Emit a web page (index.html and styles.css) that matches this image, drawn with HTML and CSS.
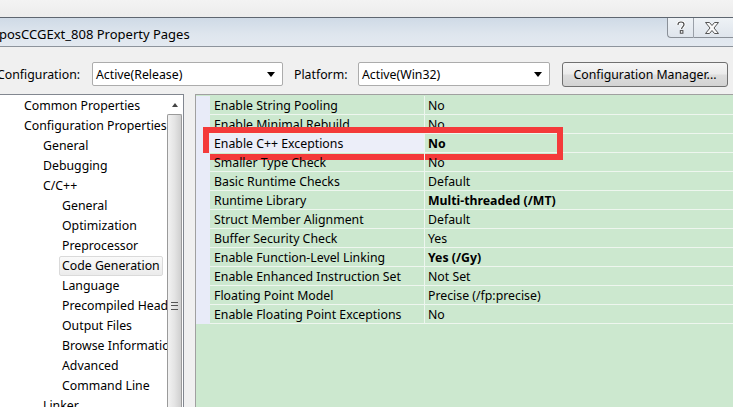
FILE: index.html
```html
<!DOCTYPE html>
<html>
<head>
<meta charset="utf-8">
<link rel="stylesheet" href="styles.css">
</head>
<body>
<div class="screen">
  <div class="topstrip"></div>
  <div class="titlebar">
    <div class="title">posCCGExt_808 Property Pages</div>
    <div class="capbtns">
      <div class="capbtn help">
        <svg width="10" height="13" viewBox="0 0 10 13"><path d="M2 4 C2 1.5 3.5 1 5 1 C7 1 8 2.2 8 3.6 C8 5.4 5.6 5.8 5.6 8" fill="none" stroke="#ffffff" stroke-width="3"/><path d="M2 4 C2 1.5 3.5 1 5 1 C7 1 8 2.2 8 3.6 C8 5.4 5.6 5.8 5.6 8" fill="none" stroke="#4a4a4a" stroke-width="1.2"/><rect x="4.3" y="9.6" width="2.6" height="2.6" fill="#fff" stroke="#4a4a4a" stroke-width="1"/></svg>
      </div>
      <div class="capbtn close">
        <svg width="16" height="12" viewBox="0 0 16 12"><path d="M1.5 0.5 H5.5 L8 3.5 L10.5 0.5 H14.5 L10 6 L14.5 11.5 H10.5 L8 8.5 L5.5 11.5 H1.5 L6 6 Z" fill="#fafafa" stroke="#555" stroke-width="1"/></svg>
      </div>
    </div>
  </div>
  <div class="dialog">
    <div class="configrow">
      <span class="lbl cfg">Configuration:</span>
      <div class="combo c1"><span>Active(Release)</span><span class="arrow"></span></div>
      <span class="lbl plat">Platform:</span>
      <div class="combo c2"><span>Active(Win32)</span><span class="arrow"></span></div>
      <div class="btn">Configuration Manager...</div>
    </div>
    <div class="main">
      <div class="tree">
        <div class="items">
          <div class="ti l1">Common Properties</div>
          <div class="ti l1">Configuration Properties</div>
          <div class="ti l2">General</div>
          <div class="ti l2">Debugging</div>
          <div class="ti l2">C/C++</div>
          <div class="ti l3">General</div>
          <div class="ti l3">Optimization</div>
          <div class="ti l3">Preprocessor</div>
          <div class="ti l3 sel"><span>Code Generation</span></div>
          <div class="ti l3">Language</div>
          <div class="ti l3">Precompiled Headers</div>
          <div class="ti l3">Output Files</div>
          <div class="ti l3">Browse Information</div>
          <div class="ti l3">Advanced</div>
          <div class="ti l3">Command Line</div>
          <div class="ti l2">Linker</div>
        </div>
        <div class="vscroll">
          <div class="upbtn"><span class="uparrow"></span></div>
          <div class="thumb"><span class="grip"></span></div>
        </div>
      </div>
      <div class="grid">
        <div class="rows">
          <div class="row"><div class="m"></div><div class="n">Enable String Pooling</div><div class="v">No</div></div>
          <div class="row"><div class="m"></div><div class="n">Enable Minimal Rebuild</div><div class="v">No</div></div>
          <div class="row selrow"><div class="m"></div><div class="n">Enable C++ Exceptions</div><div class="v b">No</div><div class="redbox"></div></div>
          <div class="row"><div class="m"></div><div class="n">Smaller Type Check</div><div class="v">No</div></div>
          <div class="row"><div class="m"></div><div class="n">Basic Runtime Checks</div><div class="v">Default</div></div>
          <div class="row"><div class="m"></div><div class="n">Runtime Library</div><div class="v b">Multi-threaded (/MT)</div></div>
          <div class="row"><div class="m"></div><div class="n">Struct Member Alignment</div><div class="v">Default</div></div>
          <div class="row"><div class="m"></div><div class="n">Buffer Security Check</div><div class="v">Yes</div></div>
          <div class="row"><div class="m"></div><div class="n">Enable Function-Level Linking</div><div class="v b">Yes (/Gy)</div></div>
          <div class="row"><div class="m"></div><div class="n">Enable Enhanced Instruction Set</div><div class="v">Not Set</div></div>
          <div class="row"><div class="m"></div><div class="n">Floating Point Model</div><div class="v">Precise (/fp:precise)</div></div>
          <div class="row"><div class="m"></div><div class="n">Enable Floating Point Exceptions</div><div class="v">No</div></div>
        </div>
      </div>
    </div>
  </div>
</div>
</body>
</html>
```
FILE: styles.css
```css
html, body {
  margin: 0;
  padding: 0;
}
body {
  width: 733px;
  height: 407px;
  overflow: hidden;
  background: #f0f0f0;
  font-family: "Noto Sans", "Open Sans", sans-serif;
  font-size: 12.3px;
  color: #000;
}
.screen {
  width: 733px;
  height: 407px;
  overflow: hidden;
  display: flex;
  flex-direction: column;
}
.topstrip {
  height: 17px;
  background: linear-gradient(#f3f3f3, #ececec);
  border-bottom: 1px solid #5e6670;
  flex: none;
}
.titlebar {
  height: 28px;
  flex: none;
  display: flex;
  justify-content: space-between;
  background: linear-gradient(#cfdae6, #dfe6ee 60%, #e3e9f0);
  border-bottom: 1px solid #8d949c;
}
.title {
  font-size: 13px;
  line-height: 28px;
  margin-left: -1px;
  padding-top: 2px;
  color: #000;
}
.capbtns {
  display: flex;
  height: 19px;
  align-self: flex-start;
}
.capbtn {
  height: 19px;
  display: flex;
  align-items: center;
  justify-content: center;
  background: linear-gradient(#eef2f6, #dfe5ec);
  border-bottom: 1px solid #8a9098;
}
.help {
  width: 25px;
  border-left: 1px solid #8a9098;
  border-bottom-left-radius: 4px;
  border-right: 1px solid #9aa0a8;
}
.close {
  width: 35px;
  padding-right: 4px;
}
.dialog {
  flex: 1;
  display: flex;
  flex-direction: column;
  background: #f0f0f0;
}
.configrow {
  display: flex;
  align-items: center;
  height: 24px;
  margin-top: 15px;
}
.cfg {
  margin-left: -3px;
  width: 95px;
}
.plat {
  margin-left: 11px;
  width: 64px;
}
.combo {
  border: 1px solid #acacac;
  border-radius: 2px;
  background: #fff;
  display: flex;
  align-items: center;
  justify-content: space-between;
  padding-left: 3px;
  padding-right: 7px;
  box-sizing: border-box;
  height: 24px;
}
.c1 { width: 191px; }
.c2 { width: 192px; }
.arrow {
  width: 0;
  height: 0;
  border-left: 4px solid transparent;
  border-right: 4px solid transparent;
  border-top: 5px solid #000;
  margin-top: 1px;
}
.btn {
  margin-left: 12px;
  width: 166px;
  height: 25px;
  box-sizing: border-box;
  border: 1px solid #707070;
  border-radius: 3px;
  background: linear-gradient(#f6f6f6 0%, #ebebeb 48%, #dddddd 52%, #d3d3d3 100%);
  display: flex;
  align-items: center;
  justify-content: center;
}
.main {
  flex: 1;
  display: flex;
  margin-top: 8px;
  min-height: 0;
}
.tree {
  width: 183px;
  flex: none;
  background: #fff;
  border-top: 1px solid #828790;
  border-right: 1px solid #828790;
  display: flex;
  overflow: hidden;
}
.items {
  flex: 1;
  overflow: hidden;
  padding-top: 1px;
}
.ti {
  height: 20px;
  line-height: 20px;
  white-space: nowrap;
  overflow: hidden;
}
.l1 { padding-left: 24px; }
.l2 { padding-left: 43px; }
.l3 { padding-left: 62px; }
.sel span {
  display: inline-block;
  margin-left: -3px;
  padding: 0 2px;
  line-height: 18px;
  border: 1px solid #dadada;
  border-radius: 2px;
  background: linear-gradient(#fafafa, #ebebeb);
}
.vscroll {
  width: 15px;
  flex: none;
  margin-right: 1px;
  display: flex;
  flex-direction: column;
  background: #eaeaea;
}
.upbtn {
  height: 19px;
  display: flex;
  align-items: center;
  justify-content: center;
  background: #fff;
}
.uparrow {
  width: 0;
  height: 0;
  border-left: 3px solid transparent;
  border-right: 3px solid transparent;
  border-bottom: 4px solid #444;
}
.thumb {
  flex: 1;
  border: 1px solid #9a9a9a;
  border-bottom: none;
  border-radius: 2px 2px 0 0;
  background: linear-gradient(90deg, #f2f2f2, #e4e4e4 50%, #cfcfcf);
  position: relative;
}
.grip {
  position: absolute;
  left: 3px;
  top: 187px;
  width: 7px;
  height: 6px;
  border-top: 1px solid #555;
  border-bottom: 1px solid #555;
}
.grip::after {
  content: "";
  position: absolute;
  left: 0;
  right: 0;
  top: 2px;
  border-top: 1px solid #555;
}
.grid {
  flex: 1;
  margin-left: 11px;
  border-top: 1px solid #a0a0a0;
  border-left: 1px solid #a0a0a0;
  background: #cce8cf;
  padding-top: 1px;
}
.rows {
  display: flex;
  flex-direction: column;
}
.row {
  display: flex;
  height: 19px;
  position: relative;
}
.m {
  width: 14px;
  flex: none;
  background: #e8ebf8;
}
.n {
  flex: none;
  width: 215px;
  padding-left: 4px;
  padding-top: 1px;
  line-height: 17px;
  border-bottom: 1px solid #eef6ef;
  border-right: 1px solid #eef6ef;
  white-space: nowrap;
  overflow: hidden;
  box-sizing: border-box;
}
.v {
  flex: 1;
  padding-left: 3px;
  padding-top: 1px;
  line-height: 17px;
  border-bottom: 1px solid #eef6ef;
  white-space: nowrap;
}
.b { font-weight: bold; }
.selrow .n {
  background: #eceef9;
}
.redbox {
  position: absolute;
  left: 7px;
  top: -7px;
  width: 360px;
  height: 33px;
  box-sizing: border-box;
  border: 6px solid #f43a3a;
}
```
